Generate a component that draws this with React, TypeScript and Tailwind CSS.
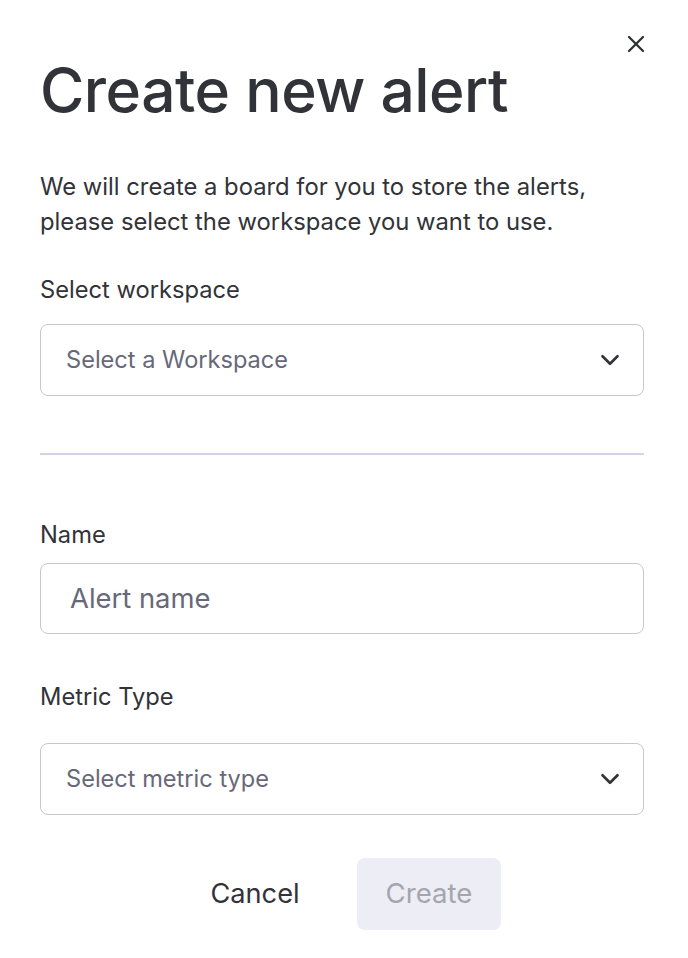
import { X, ChevronDown } from "lucide-react";

function SelectBox({ placeholder }: { placeholder: string }) {
  return (
    <div className="flex h-[72px] w-full items-center justify-between rounded-lg border border-[#c5c7d0] pl-[25px] pr-[18px]">
      <span className="text-[23.6px] text-[#676879]">{placeholder}</span>
      <ChevronDown className="h-[30px] w-[30px] text-[#323338]" strokeWidth={2.1} />
    </div>
  );
}

export default function App() {
  return (
    <div
      className="relative min-h-[958px] w-full bg-white pl-10 pr-[44px] pt-[52px] text-[#323338]"
      style={{ fontFamily: "Inter, 'Noto Sans', sans-serif" }}
    >
      <button type="button" className="absolute right-[38px] top-[30px] text-[#323338]">
        <X className="h-[28px] w-[28px]" strokeWidth={2} />
      </button>

      <h1 className="text-[60.5px] font-medium leading-[76px] tracking-[-0.5px]">
        Create new alert
      </h1>

      <p className="mt-[41px] text-[23.8px] leading-[35px]">
        We will create a board for you to store the alerts,
        <br />
        please select the workspace you want to use.
      </p>

      <label className="mt-[35px] block text-[23.7px] leading-[32px]">Select workspace</label>
      <div className="mt-[18px]">
        <SelectBox placeholder="Select a Workspace" />
      </div>

      <div className="mt-[57px] h-[2px] w-full bg-[#d0d4e4]" />

      <label className="mt-[64px] block text-[23.7px] leading-[32px]">Name</label>
      <div className="mt-[12px] flex h-[71px] items-center rounded-lg border border-[#c5c7d0] pl-[29px]">
        <span className="text-[27.4px] text-[#676879]">Alert name</span>
      </div>

      <label className="mt-[47px] block text-[23.7px] leading-[32px]">Metric Type</label>
      <div className="mt-[30px]">
        <SelectBox placeholder="Select metric type" />
      </div>

      <div className="mt-[43px] flex items-center justify-center gap-[30px]">
        <button type="button" className="h-[72px] w-[144px] text-[27.2px] text-[#323338]">
          Cancel
        </button>
        <button
          type="button"
          className="h-[72px] w-[144px] rounded-lg bg-[#ecedf5] text-[27.6px] text-[#a5a5ad]"
        >
          Create
        </button>
      </div>
    </div>
  );
}
